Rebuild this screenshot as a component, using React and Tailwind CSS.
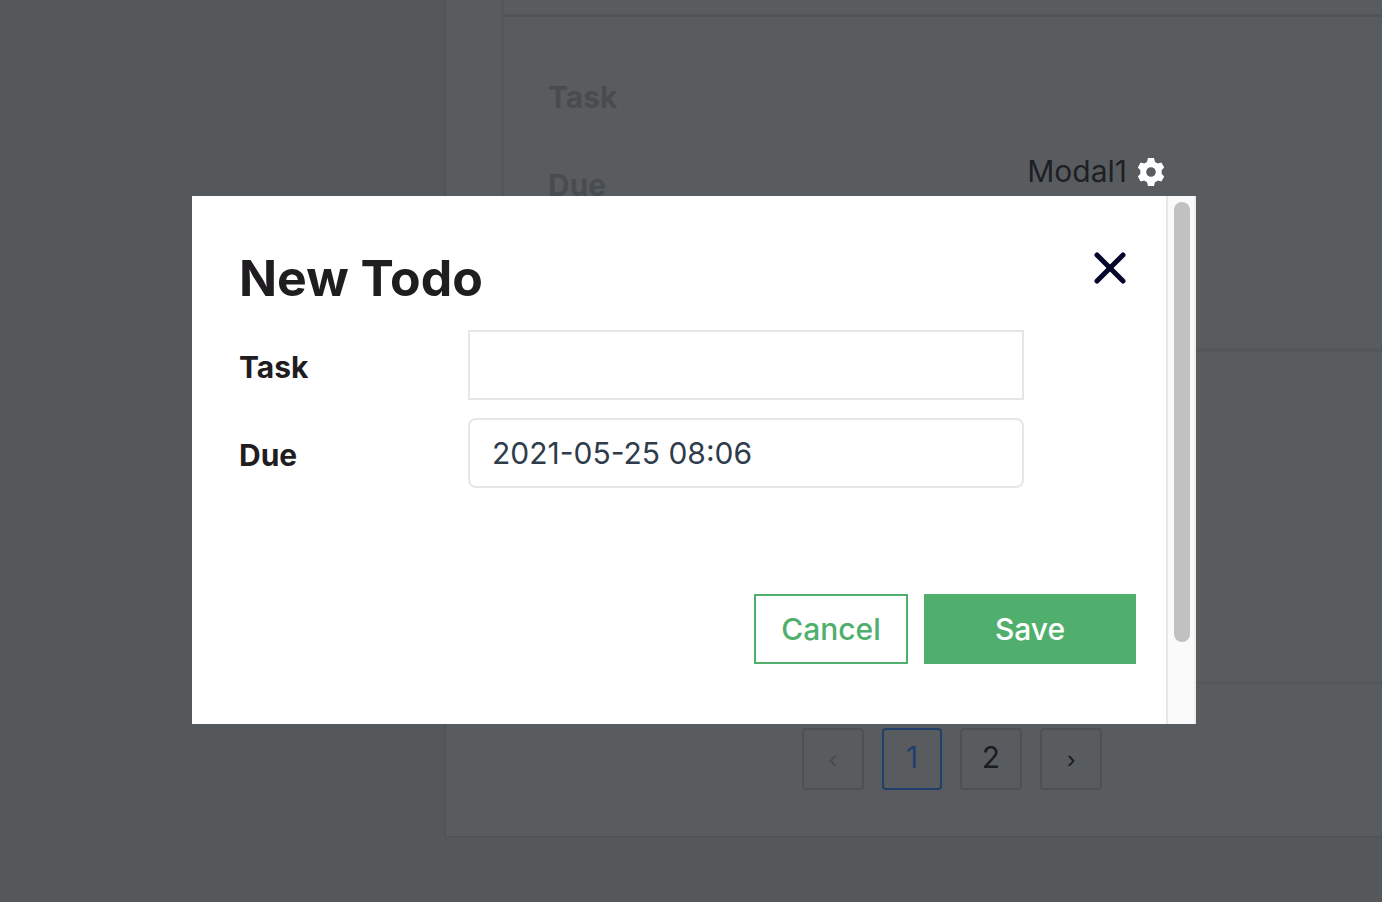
import React, { useState } from 'react'

export default function App() {
  return (
    <div className="relative min-h-screen overflow-hidden bg-[#54585b] font-['Inter',sans-serif] text-[30px] leading-9">
      <TodoPage />
      <div className="absolute inset-0 pt-[146px] pr-[186px] pl-48">
        <div className="flex h-[50px] items-center justify-end gap-2.5 pr-[31px] text-[#1d2025]">
          <span>Modal1</span>
          <button type="button" aria-label="Modal settings" className="pt-0.5 text-white">
            <GearIcon />
          </button>
        </div>
        <TodoModal />
      </div>
    </div>
  )
}

function GearIcon() {
  return (
    <svg viewBox="-14 -14 28 28" className="size-7" fill="currentColor">
      <path
        fillRule="evenodd"
        d="M-3 -14H3L4 -10Q5.6 -9.4 6.8 -8.4L10.4 -9.4L13.2 -4.4L10.6 -1.8Q10.9 0 10.6 1.8L13.2 4.4L10.4 9.4L6.8 8.4Q5.6 9.4 4 10L3 14H-3L-4 10Q-5.6 9.4 -6.8 8.4L-10.4 9.4L-13.2 4.4L-10.6 1.8Q-10.9 0 -10.6 -1.8L-13.2 -4.4L-10.4 -9.4L-6.8 -8.4Q-5.6 -9.4 -4 -10ZM0 -4.8A4.8 4.8 0 1 0 0 4.8A4.8 4.8 0 1 0 0 -4.8Z"
      />
    </svg>
  )
}

function TodoPage() {
  return (
    <main className="ml-[444px] border-b-2 border-l-2 border-[#505457] bg-[#585c5f] pb-[46px] pl-14">
      <div className="border-l-2 border-[#53575a]">
        <div className="h-3.5" />
        <div className="flex h-[338px] flex-col gap-[52px] border-t-3 border-b-4 border-t-[#505457] border-b-[#53575a] pt-[62px] pl-11 font-bold text-[#484c4f]">
          <p>Task</p>
          <p>Due</p>
        </div>
        <div className="h-[332px] border-b-2 border-[#53575a]" />
      </div>
      <nav aria-label="Pagination" className="flex gap-[18px] pt-11 pl-[300px] text-[#1a1d20]">
        <button type="button" disabled className="h-[62px] w-[62px] rounded border-2 border-[#4d5154] font-['Liberation_Sans',sans-serif] text-[26px] text-[#484c4f]">‹</button>
        <button type="button" className="h-[62px] w-[60px] rounded border-2 border-[#203f6c] pb-1 text-[#203f6c]">1</button>
        <button type="button" className="h-[62px] w-[62px] rounded border-2 border-[#4d5154] pb-1">2</button>
        <button type="button" className="h-[62px] w-[62px] rounded border-2 border-[#4d5154] font-['Liberation_Sans',sans-serif] text-[26px]">›</button>
      </nav>
    </main>
  )
}

function TodoModal() {
  const [task, setTask] = useState('')
  const [due, setDue] = useState('2021-05-25 08:06')

  return (
    <div role="dialog" aria-labelledby="modal-title" className="flex bg-white text-[#1f1d1f]">
      <form className="flex-1 pt-12 pr-[30px] pb-[60px] pl-[47px]" onSubmit={e => e.preventDefault()}>
        <div className="flex items-start justify-between">
          <h1 id="modal-title" className="text-[50px] leading-[68px] font-bold">New Todo</h1>
          <button type="button" aria-label="Close" className="mt-2 mr-2.5">
            <svg viewBox="0 0 32 32" className="size-8" fill="none" stroke="#05072a" strokeWidth="5" strokeLinecap="round">
              <path d="M3 3L29 29M29 3L3 29" />
            </svg>
          </button>
        </div>

        <div className="mt-[18px] grid grid-cols-[229px_1fr] items-center gap-y-[18px] pr-28">
          <label htmlFor="task" className="pt-1 font-bold">Task</label>
          <input id="task" value={task} onChange={e => setTask(e.target.value)} className="h-[70px] w-full border-2 border-[#e6e6e6] px-[22px] text-[#2f3c4b]" />
          <label htmlFor="due" className="pt-1 font-bold">Due</label>
          <input id="due" value={due} onChange={e => setDue(e.target.value)} className="h-[70px] w-full rounded-lg border-2 border-[#e6e6e6] px-[22px] text-[#2f3c4b]" />
        </div>

        <div className="mt-[106px] flex justify-end gap-4 font-medium">
          <button type="button" className="h-[70px] w-[154px] border-2 border-[#50af6d] text-[#50af6d]">Cancel</button>
          <button type="submit" className="h-[70px] w-[212px] bg-[#50af6d] text-white">Save</button>
        </div>
      </form>

      <div className="w-[30px] border-r-2 border-l-2 border-r-[#ededed] border-l-[#e7e7e7] bg-[#fafafa] pt-1.5 pl-1.5">
        <div className="h-[440px] w-4 rounded-full bg-[#c1c1c1]" />
      </div>
    </div>
  )
}
